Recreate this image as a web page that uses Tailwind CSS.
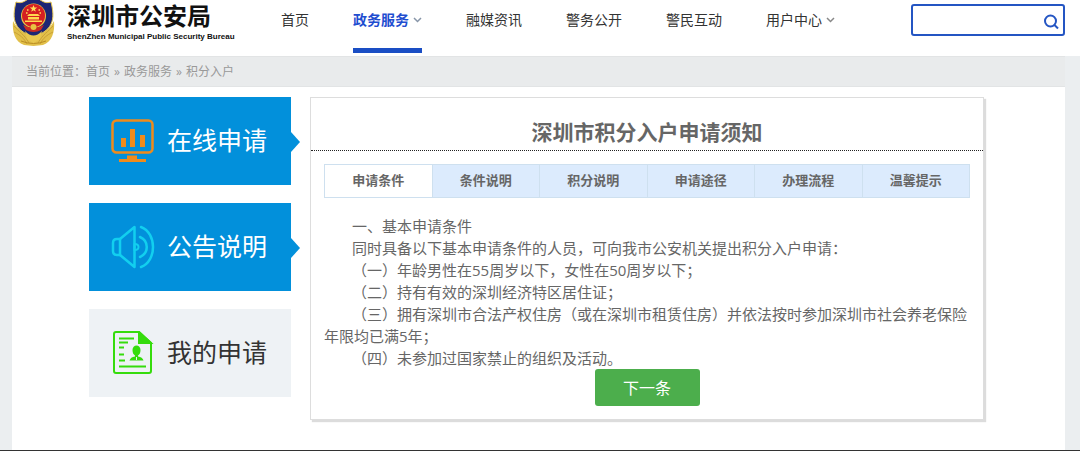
<!DOCTYPE html>
<html lang="zh-CN">
<head>
    <meta charset="UTF-8">
    <meta name="viewport" content="width=device-width, initial-scale=1.0">
    <title>深圳市公安局 - 积分入户</title>
    <script src="https://cdn.jsdelivr.net/npm/@tailwindcss/browser@4"></script>
</head>
<body class="min-h-screen flex flex-col bg-[#ebeef0] text-[#666] font-['Open_Sans','Noto_Sans_CJK_SC',sans-serif]">
    <header class="bg-white h-14 pl-3 pr-[15px] flex items-start justify-between">
        <div class="flex">
            <a href="#" class="flex w-[269px] gap-3">
                <svg class="w-[43px] h-[47px] shrink-0" viewBox="0 0 43 47" aria-hidden="true">
                    <path d="M1 21C0 32 3 42 12 45L21.500 46L31 45C40 42 43 32 42 21C39 27 36 29 32 31H11C7 29 4 27 1 21Z" fill="#e2c04a"/>
                    <path d="M2 26C7 32 12 34 17 43M2 32C8 35 12 38 15 44M41 26C36 32 31 34 26 43M41 32C35 35 31 38 28 44" fill="none" stroke="#c9a136" stroke-width="1"/>
                    <path d="M21.500 -4L13 1C10 3 7 3 4 2C2 10 1 18 4 24C7 31 14 33 21.500 39C29 33 36 31 39 24C42 18 41 10 39 2C36 3 33 3 30 1Z" fill="#1c2674" stroke="#e5c552" stroke-width="1"/>
                    <path d="M13 31Q21.500 40 30 31L28 39L21.500 43L15 39Z" fill="#e9c84f"/>
                    <circle cx="21.500" cy="16" r="12.500" fill="#e8c443"/>
                    <circle cx="21.500" cy="15.500" r="11.500" fill="#d51f22"/>
                    <path d="M21.500 5l1 2.600h2.700l-2.200 1.600.8 2.600-2.300-1.600-2.300 1.600.8-2.600-2.200-1.600h2.700z" fill="#ffe05a"/>
                    <path d="M15 16h13l-2-2h-9zM16 17h11v2.500H16zM13 20.500h17v1.500H13z" fill="#ffd94e"/>
                    <path d="M15 10h1.500M26.500 10H28M14 13h1.500M27.500 13H29" stroke="#ffe05a" stroke-width="1.500"/>
                    <path d="M11 25Q21.500 30 32 25L29 30Q21.500 34 14 30Z" fill="#c92a22"/>
                    <circle cx="21.500" cy="27" r="3" fill="#e8c443"/>
                    <path d="M9 41Q21.500 46 34 41" fill="none" stroke="#ba8e24" stroke-width="1"/>
                </svg>
                <span class="block text-[#111] whitespace-nowrap">
                    <span class="block text-2xl leading-[30px] font-bold font-['Noto_Sans_CJK_SC',sans-serif]">深圳市公安局</span>
                    <span class="block text-[8px] leading-[14px] font-bold font-['Liberation_Sans',sans-serif]">ShenZhen Municipal Public Security Bureau</span>
                </span>
            </a>
            <nav class="flex gap-11 text-sm leading-10 text-[#333] whitespace-nowrap">
                <a href="#">首页</a>
                <a href="#" class="flex items-center h-[53px] pb-2 gap-1 font-bold text-[#1f4ed0] border-b-5 border-[#1a4ec4]">政务服务
                    <svg class="w-[9px] h-[6px]" viewBox="0 0 9 6" fill="none" stroke="#8795a8" stroke-width="1.500"><path d="M1 1l3.500 3.500L8 1"/></svg>
                </a>
                <a href="#">融媒资讯</a>
                <a href="#">警务公开</a>
                <a href="#">警民互动</a>
                <a href="#" class="flex items-center h-10 gap-1">用户中心
                    <svg class="w-[9px] h-[6px]" viewBox="0 0 9 6" fill="none" stroke="#888" stroke-width="1.500"><path d="M1 1l3.500 3.500L8 1"/></svg>
                </a>
            </nav>
        </div>
        <form class="mt-1 w-[154px] h-8 flex items-center border-2 border-[#2455c3] rounded-[3px]" onsubmit="return false">
            <input type="text" aria-label="搜索" class="flex-1 min-w-0 h-full px-2 text-sm outline-none">
            <button type="submit" aria-label="搜索" class="px-1 pt-1">
                <svg class="w-4 h-4" viewBox="0 0 16 16" fill="none" stroke="#2455c3" stroke-width="2"><circle cx="7.500" cy="7" r="5.500"/><path d="M11 10.500l4 4"/></svg>
            </button>
        </form>
    </header>

    <div class="flex-1 flex flex-col pl-3 pr-[15px] border-b border-[#333]">
        <nav class="h-[31px] px-[14px] pt-px flex items-center gap-1 bg-[#e9ebec] border-y border-[#e2e4e5] text-xs text-[#999]">
            <span>当前位置：<a href="#">首页</a></span>
            <span>»</span>
            <a href="#">政务服务</a>
            <span>»</span>
            <a href="#">积分入户</a>
        </nav>

        <div class="flex-1 bg-white pt-[10px] pr-1">
            <div class="max-w-[895px] mx-auto flex items-start gap-[19px]">
                <aside class="w-[202px] shrink-0 flex flex-col gap-[18px] text-[25px] text-white">
                    <a href="#" class="relative h-[88px] pl-[22px] flex items-center gap-3 bg-[#0290db]">
                        <svg class="w-11 h-11" viewBox="0 0 44 44" fill="none" stroke="#ef8b1c" aria-hidden="true">
                            <rect x="1.500" y="1.500" width="40" height="32" rx="4" stroke-width="2.500"/>
                            <path d="M12.500 28v-9M21.500 28V10M31.500 28V16" stroke-width="5"/>
                            <path d="M8 41.500h27" stroke-width="3"/>
                            <path d="M16 38.500h10" stroke-width="4"/>
                        </svg>
                        在线申请
                        <span class="absolute left-full top-[35px] border-y-[10px] border-y-transparent border-l-[9px] border-l-[#0290db]"></span>
                    </a>
                    <a href="#" class="relative h-[88px] pl-[22px] flex items-center gap-3 bg-[#0290db]">
                        <svg class="w-11 h-11" viewBox="0 0 44 44" fill="none" stroke="#12cfef" stroke-width="2.500" stroke-linecap="round" stroke-linejoin="round" aria-hidden="true">
                            <path d="M9 14L23.500 2v40L9 30"/>
                            <path d="M9 14v16H6q-4 0-4-4v-8q0-4 4-4z"/>
                            <path d="M23.500 19q4 0 4 3t-4 3z" stroke-width="2"/>
                            <path d="M29 12c9 4 9 16 0 20M30 2c16 6 16 34 0 40"/>
                        </svg>
                        公告说明
                        <span class="absolute left-full top-[35px] border-y-[10px] border-y-transparent border-l-[9px] border-l-[#0290db]"></span>
                    </a>
                    <a href="#" class="h-[88px] pl-[22px] flex items-center gap-3 bg-[#eef2f5] text-[#333]">
                        <svg class="w-11 h-11" viewBox="0 0 44 44" fill="none" stroke="#35dc0c" stroke-width="2" aria-hidden="true">
                            <path d="M28 1H5q-2 0-2 2v37q0 2 2 2h33q2 0 2-2V12z"/>
                            <path d="M28 1v11h12z" fill="#35dc0c"/>
                            <path d="M8 7.500h15M8 11.500h9M8 16.500h5M8 23.500h5M8 29.500h6M8 35.500h27"/>
                            <path d="M21.500 19a4 4.500 0 0 1 8 0q0 4-2.500 5.500v1q4.500.5 5.500 4h-14q1-3.500 5.500-4v-1q-2.500-1.500-2.500-5.500z" fill="#35dc0c" stroke="none"/>
                            <path d="M25.500 26v3" stroke="#eef2f5" stroke-width="1"/>
                        </svg>
                        我的申请
                    </a>
                </aside>

                <main class="flex-1 border border-[#ddd] shadow-[2px_2px_1px_#dcdcdc] pb-[13px]">
                    <h1 class="h-[53px] pt-[17px] text-center text-[21px] leading-[34px] font-bold border-b border-dotted border-[#222]">深圳市积分入户申请须知</h1>
                    <div class="px-[13px] pt-[13px]">
                        <div role="tablist" class="grid grid-cols-6 h-[34px] text-[13px] font-bold bg-[#dcebfd] border-y border-r border-[#cee0ef]">
                            <button role="tab" aria-selected="true" class="bg-white border-l border-[#cee0ef]">申请条件</button>
                            <button role="tab" class="border-l border-[#cee0ef]">条件说明</button>
                            <button role="tab" class="border-l border-[#cee0ef]">积分说明</button>
                            <button role="tab" class="border-l border-[#cee0ef]">申请途径</button>
                            <button role="tab" class="border-l border-[#cee0ef]">办理流程</button>
                            <button role="tab" class="border-l border-[#cee0ef]">温馨提示</button>
                        </div>
                        <div class="pt-[17px] text-[15px] leading-[22px] *:indent-[28px]">
                            <p>一、基本申请条件</p>
                            <p>同时具备以下基本申请条件的人员，可向我市公安机关提出积分入户申请：</p>
                            <p>（一）年龄男性在55周岁以下，女性在50周岁以下；</p>
                            <p>（二）持有有效的深圳经济特区居住证；</p>
                            <p>（三）拥有深圳市合法产权住房（或在深圳市租赁住房）并依法按时参加深圳市社会养老保险年限均已满5年；</p>
                            <p>（四）未参加过国家禁止的组织及活动。</p>
                        </div>
                        <button class="block mx-auto w-[105px] h-[37px] rounded-[3px] bg-[#4cae4c] text-white text-base">下一条</button>
                    </div>
                </main>
            </div>
        </div>
    </div>
</body>
</html>
